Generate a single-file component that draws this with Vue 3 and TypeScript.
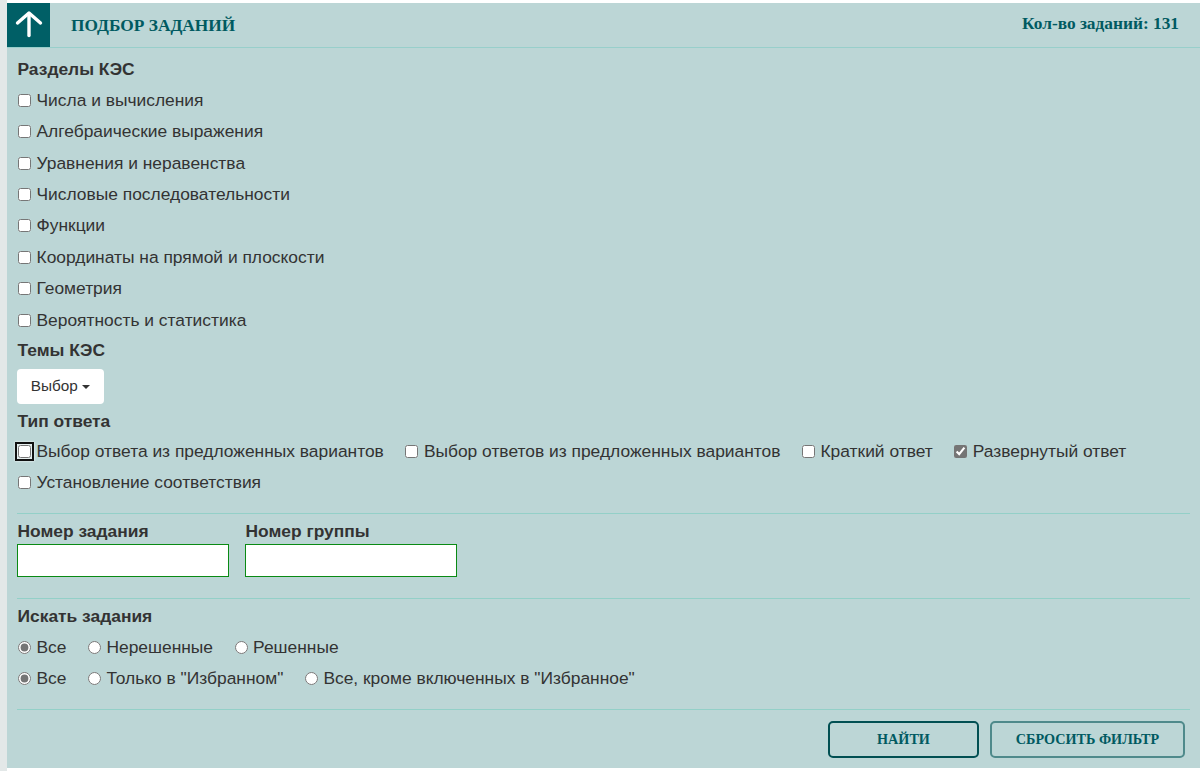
<script setup lang="ts">
const sections: string[] = [
  'Числа и вычисления',
  'Алгебраические выражения',
  'Уравнения и неравенства',
  'Числовые последовательности',
  'Функции',
  'Координаты на прямой и плоскости',
  'Геометрия',
  'Вероятность и статистика',
]
const answers = [
  { text: 'Выбор ответа из предложенных вариантов', checked: false, focus: true },
  { text: 'Выбор ответов из предложенных вариантов', checked: false, focus: false },
  { text: 'Краткий ответ', checked: false, focus: false },
  { text: 'Развернутый ответ', checked: true, focus: false },
  { text: 'Установление соответствия', checked: false, focus: false },
]
const radiosA: string[] = ['Все', 'Нерешенные', 'Решенные']
const radiosB: string[] = ['Все', 'Только в "Избранном"', 'Все, кроме включенных в "Избранное"']
</script>

<template>
  <div class="page">
    <div class="panel">
      <header class="head">
        <div class="up">
          <svg width="30" height="30" viewBox="0 0 30 30" fill="none" stroke="#fff" stroke-width="3.4" stroke-linecap="round" stroke-linejoin="round">
            <path d="M15 25.5V4" />
            <path d="M3.5 13 15 3 26.5 13" />
          </svg>
        </div>
        <h1 class="title">ПОДБОР ЗАДАНИЙ</h1>
        <div class="count">Кол-во заданий: 131</div>
      </header>

      <div class="body">
        <div class="label first">Разделы КЭС</div>
        <div class="stack">
          <label v-for="s in sections" :key="s" class="row">
            <input type="checkbox" class="box" />{{ s }}
          </label>
        </div>

        <div class="label themes">Темы КЭС</div>
        <button class="pick" type="button">Выбор <span class="caret"></span></button>

        <div class="label type">Тип ответа</div>
        <div class="answers">
          <label v-for="a in answers" :key="a.text" class="row inline">
            <input type="checkbox" class="box" :class="{ focus: a.focus }" :checked="a.checked" />{{ a.text }}
          </label>
        </div>

        <hr class="rule r1" />

        <div class="fields">
          <div class="field">
            <div class="label">Номер задания</div>
            <input class="text" type="text" />
          </div>
          <div class="field">
            <div class="label">Номер группы</div>
            <input class="text" type="text" />
          </div>
        </div>

        <hr class="rule r2" />

        <div class="label search">Искать задания</div>
        <div class="radios top">
          <label v-for="(r, i) in radiosA" :key="r" class="row inline">
            <input type="radio" name="a" class="box" :checked="i === 0" />{{ r }}
          </label>
        </div>
        <div class="radios">
          <label v-for="(r, i) in radiosB" :key="r" class="row inline">
            <input type="radio" name="b" class="box" :checked="i === 0" />{{ r }}
          </label>
        </div>

        <hr class="rule r3" />

        <div class="actions">
          <button class="btn primary" type="button">НАЙТИ</button>
          <button class="btn reset" type="button">СБРОСИТЬ ФИЛЬТР</button>
        </div>
      </div>
    </div>
  </div>
</template>

<style>
html, body { margin: 0; background: #fff; }
</style>

<style scoped>
.page {
  width: 1200px;
  height: 771px;
  box-sizing: border-box;
  padding: 3px 0 3px 7px;
  background: linear-gradient(to right, #e3e8e8 7px, #fff 7px);
  overflow: hidden;
  font-family: "Liberation Sans", Arial, sans-serif;
  font-size: 17.4px;
  color: #333;
}
.panel { height: 100%; background: #bcd6d6; }
.head {
  height: 44px;
  display: flex;
  align-items: center;
  border-bottom: 1px solid #98cfcb;
  font-family: "Liberation Serif", serif;
  font-weight: bold;
  color: #005a61;
}
.up {
  width: 43px;
  height: 44px;
  background: #005f66;
  display: flex;
  align-items: center;
  justify-content: center;
}
.title { margin: 2px 0 0 21px; font-size: 17.33px; font-weight: bold; line-height: 1; }
.count { margin: -3px 21px 0 auto; font-size: 17.33px; }
.body { padding: 0 10px; }
.label { font-weight: bold; line-height: 18px; padding: 0 0 2px 0.5px; }
.first { padding-top: 12px; }
.stack { display: flex; flex-direction: column; margin-top: 4.7px; }
.row { display: flex; align-items: center; height: 31.4px; white-space: nowrap; }
.inline { display: inline-flex; margin-right: 20.5px; }
.box { width: 13px; height: 13px; margin: 0 5.5px 0 1px; flex: none; accent-color: #757575; }
.focus { outline: 2px solid #101010; outline-offset: 1px; border-radius: 3px; filter: drop-shadow(0 0 1px #fff); }
.themes { margin-top: 5.3px; }
.pick {
  display: block;
  margin-top: 8px;
  width: 87px;
  height: 35px;
  background: #fff;
  border: 0;
  border-radius: 4px;
  font: 15.33px "Liberation Sans", Arial, sans-serif;
  color: #333;
  padding: 0 0 2px;
}
.caret {
  display: inline-block;
  width: 0;
  height: 0;
  vertical-align: middle;
  margin-left: 0;
  border-top: 4px solid #333;
  border-left: 4px solid transparent;
  border-right: 4px solid transparent;
}
.type { margin-top: 8px; }
.answers { margin-top: 3.7px; }
.rule { border: 0; border-top: 1px solid #93d0c8; margin: 0; }
.r1 { margin-top: 14.3px; }
.fields { display: flex; gap: 16px; margin-top: 8px; }
.field { width: 212px; }
.text {
  display: block;
  width: 100%;
  height: 33px;
  margin-top: 2px;
  box-sizing: border-box;
  border: 1px solid #0a8a14;
  background: #fff;
  outline: 0;
}
.r2 { margin-top: 21px; }
.search { margin-top: 8px; }
.radios { height: 31.4px; display: flex; }
.top { margin-top: 5px; }
.r3 { margin-top: 14px; }
.actions { display: flex; justify-content: flex-end; gap: 11px; margin: 11px 5px 0 0; }
.btn {
  height: 37px;
  box-sizing: border-box;
  background: #bcd6d6;
  border: 2px solid #4f8a8b;
  border-radius: 5px;
  font: bold 14.2px "Liberation Serif", serif;
  color: #005a61;
  padding: 0;
}
.reset { width: 195px; }
.primary { width: 151px; border-color: #014f52; }
</style>
